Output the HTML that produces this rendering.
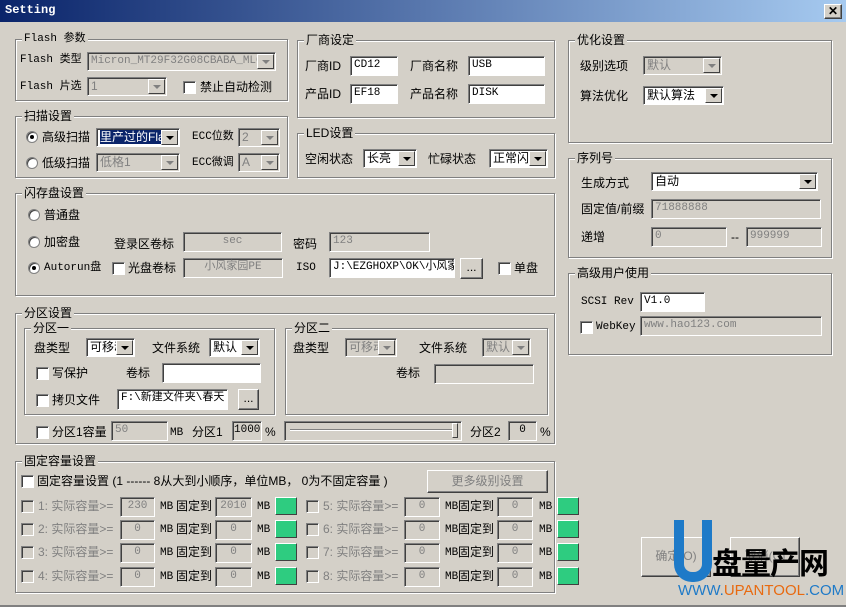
<!DOCTYPE html><html><head><meta charset="utf-8"><style>
*{margin:0;padding:0;box-sizing:border-box}
body{width:846px;height:607px;background:#d4d0c8;font:12px "Liberation Sans","Noto Sans CJK SC",sans-serif;color:#000;position:relative;overflow:hidden}
.a{position:absolute;white-space:nowrap}
.t{position:absolute;white-space:nowrap;line-height:16px}
.g{position:absolute;border:1px solid #808080;box-shadow:1px 1px 0 #fff,inset 1px 1px 0 #fff}
.g>span{position:absolute;top:-9px;left:6px;background:#d4d0c8;padding:0 2px;line-height:16px}
.i{position:absolute;background:#fff;border:1px solid;border-color:#808080 #fff #fff #808080;box-shadow:inset 1px 1px 0 #404040;padding:1px 3px;line-height:15px;overflow:hidden;white-space:nowrap;font-family:"Liberation Mono","Noto Sans CJK SC",monospace;font-size:11px}
.d{background:#d4d0c8;color:#808080}
.c{position:absolute;background:#fff;border:1px solid;border-color:#808080 #fff #fff #808080;box-shadow:inset 1px 1px 0 #404040;padding:1px 3px;line-height:15px;overflow:hidden;white-space:nowrap}
.c.d{background:#d4d0c8;color:#808080}
.c:after{content:"";position:absolute;right:1px;top:1px;bottom:1px;width:15px;background:#d4d0c8;border:1px solid;border-color:#fff #404040 #404040 #fff}
.c:before{content:"";position:absolute;right:5px;top:7px;width:0;height:0;border-left:4px solid transparent;border-right:4px solid transparent;border-top:4px solid #000;z-index:2}
.c.d:before{border-top-color:#808080}
.cb{position:absolute;width:13px;height:13px;background:#fff;border:1px solid;border-color:#808080 #fff #fff #808080;box-shadow:inset 1px 1px 0 #404040}
.cb.d{background:#d4d0c8}
.r{position:absolute;width:12px;height:12px;border-radius:50%;background:#fff;border:1px solid #808080;box-shadow:inset 1px 1px 0 #404040}
.r.on:after{content:"";position:absolute;left:3px;top:3px;width:4px;height:4px;border-radius:50%;background:#000}
.b{position:absolute;background:#d4d0c8;border:1px solid;border-color:#fff #404040 #404040 #fff;box-shadow:inset -1px -1px 0 #808080;text-align:center}
.gr{position:absolute;width:22px;height:18px;background:#2ecc80;border:1px solid;border-color:#fff #404040 #404040 #fff}
.dl{color:#808080}
.m{font-family:"Liberation Mono","Noto Sans CJK SC",monospace;font-size:11px}
</style></head><body>
<div class="a" style="left:0;top:0;width:846px;height:22px;background:linear-gradient(90deg,#0a246a,#a6caf0)"></div>
<div class="a m" style="left:5px;top:3px;color:#fff;font-size:12px;font-weight:bold">Setting</div>
<div class="b" style="left:824px;top:4px;width:18px;height:15px;line-height:12px;font-weight:bold">✕</div>

<div class="g" style="left:15px;top:39px;width:273px;height:62px"><span class="m">Flash 参数</span></div>
<div class="t m" style="left:20px;top:52px">Flash 类型</div>
<div class="c d" style="left:87px;top:52px;width:189px;height:19px;font-family:'Liberation Mono',monospace;font-size:11px">Micron_MT29F32G08CBABA_MLC</div>
<div class="t m" style="left:20px;top:79px">Flash 片选</div>
<div class="c d" style="left:87px;top:77px;width:80px;height:19px">1</div>
<div class="cb" style="left:183px;top:81px"></div><div class="t" style="left:200px;top:79px">禁止自动检测</div>

<div class="g" style="left:15px;top:116px;width:273px;height:62px"><span>扫描设置</span></div>
<div class="r on" style="left:26px;top:131px"></div><div class="t" style="left:42px;top:129px">高级扫描</div>
<div class="c" style="left:96px;top:128px;width:84px;height:19px"><span style="background:#0a246a;color:#fff">里产过的Fla</span></div>
<div class="t m" style="left:192px;top:129px">ECC位数</div>
<div class="c d" style="left:238px;top:128px;width:42px;height:19px">2</div>
<div class="r" style="left:26px;top:157px"></div><div class="t" style="left:42px;top:155px">低级扫描</div>
<div class="c d" style="left:96px;top:153px;width:84px;height:19px">低格1</div>
<div class="t m" style="left:192px;top:155px">ECC微调</div>
<div class="c d" style="left:238px;top:153px;width:42px;height:19px">A</div>

<div class="g" style="left:297px;top:40px;width:258px;height:78px"><span>厂商设定</span></div>
<div class="t" style="left:305px;top:58px">厂商ID</div><div class="i" style="left:350px;top:56px;width:48px;height:20px">CD12</div>
<div class="t" style="left:410px;top:58px">厂商名称</div><div class="i" style="left:468px;top:56px;width:77px;height:20px">USB</div>
<div class="t" style="left:305px;top:86px">产品ID</div><div class="i" style="left:350px;top:84px;width:48px;height:20px">EF18</div>
<div class="t" style="left:410px;top:86px">产品名称</div><div class="i" style="left:468px;top:84px;width:77px;height:20px">DISK</div>

<div class="g" style="left:297px;top:133px;width:258px;height:45px"><span>LED设置</span></div>
<div class="t" style="left:305px;top:151px">空闲状态</div><div class="c" style="left:363px;top:149px;width:54px;height:19px">长亮</div>
<div class="t" style="left:428px;top:151px">忙碌状态</div><div class="c" style="left:489px;top:149px;width:59px;height:19px">正常闪</div>

<div class="g" style="left:568px;top:40px;width:264px;height:103px"><span>优化设置</span></div>
<div class="t" style="left:580px;top:58px">级别选项</div><div class="c d" style="left:643px;top:56px;width:79px;height:19px">默认</div>
<div class="t" style="left:580px;top:88px">算法优化</div><div class="c" style="left:643px;top:86px;width:81px;height:19px">默认算法</div>

<div class="g" style="left:568px;top:158px;width:264px;height:100px"><span>序列号</span></div>
<div class="t" style="left:581px;top:175px">生成方式</div><div class="c" style="left:651px;top:172px;width:167px;height:19px">自动</div>
<div class="t" style="left:581px;top:201px">固定值/前缀</div><div class="i d" style="left:651px;top:199px;width:170px;height:20px">71888888</div>
<div class="t" style="left:581px;top:229px">递增</div><div class="i d" style="left:651px;top:227px;width:76px;height:20px">0</div>
<div class="t" style="left:731px;top:229px">--</div><div class="i d" style="left:746px;top:227px;width:76px;height:20px">999999</div>

<div class="g" style="left:568px;top:273px;width:264px;height:82px"><span>高级用户使用</span></div>
<div class="t m" style="left:581px;top:294px">SCSI Rev</div><div class="i" style="left:640px;top:292px;width:65px;height:20px">V1.0</div>
<div class="cb" style="left:580px;top:321px"></div><div class="t m" style="left:596px;top:319px">WebKey</div>
<div class="i d" style="left:640px;top:316px;width:182px;height:20px">www.hao123.com</div>

<div class="g" style="left:15px;top:193px;width:540px;height:103px"><span>闪存盘设置</span></div>
<div class="r" style="left:28px;top:209px"></div><div class="t" style="left:44px;top:207px">普通盘</div>
<div class="r" style="left:28px;top:236px"></div><div class="t" style="left:44px;top:234px">加密盘</div>
<div class="t" style="left:114px;top:236px">登录区卷标</div><div class="i d" style="left:183px;top:232px;width:99px;height:20px;text-align:center">sec</div>
<div class="t" style="left:293px;top:236px">密码</div><div class="i d" style="left:329px;top:232px;width:101px;height:20px">123</div>
<div class="r on" style="left:28px;top:262px"></div><div class="t m" style="left:44px;top:260px">Autorun盘</div>
<div class="cb" style="left:112px;top:262px"></div><div class="t" style="left:128px;top:260px">光盘卷标</div>
<div class="i d" style="left:183px;top:258px;width:100px;height:20px;text-align:center">小风家园PE</div>
<div class="t m" style="left:296px;top:260px">ISO</div><div class="i" style="left:329px;top:258px;width:126px;height:20px">J:\EZGHOXP\OK\小风家</div>
<div class="b" style="left:460px;top:258px;width:23px;height:21px;line-height:17px">...</div>
<div class="cb" style="left:498px;top:262px"></div><div class="t" style="left:514px;top:260px">单盘</div>

<div class="g" style="left:15px;top:313px;width:540px;height:131px"><span>分区设置</span></div>
<div class="g" style="left:24px;top:328px;width:251px;height:87px"><span>分区一</span></div>
<div class="t" style="left:34px;top:340px">盘类型</div><div class="c" style="left:86px;top:338px;width:49px;height:19px">可移动</div>
<div class="t" style="left:152px;top:340px">文件系统</div><div class="c" style="left:209px;top:338px;width:51px;height:19px">默认</div>
<div class="cb" style="left:36px;top:367px"></div><div class="t" style="left:52px;top:365px">写保护</div>
<div class="t" style="left:126px;top:365px">卷标</div><div class="i" style="left:162px;top:363px;width:99px;height:20px"></div>
<div class="cb" style="left:36px;top:394px"></div><div class="t" style="left:52px;top:392px">拷贝文件</div>
<div class="i" style="left:117px;top:389px;width:111px;height:21px">F:\新建文件夹\春天</div>
<div class="b" style="left:238px;top:389px;width:21px;height:21px;line-height:17px">...</div>
<div class="g" style="left:285px;top:328px;width:263px;height:87px"><span>分区二</span></div>
<div class="t" style="left:293px;top:340px">盘类型</div><div class="c d" style="left:345px;top:338px;width:52px;height:19px">可移动</div>
<div class="t" style="left:419px;top:340px">文件系统</div><div class="c d" style="left:482px;top:338px;width:49px;height:19px">默认</div>
<div class="t" style="left:396px;top:365px">卷标</div><div class="i d" style="left:434px;top:364px;width:100px;height:20px"></div>
<div class="cb" style="left:36px;top:426px"></div><div class="t" style="left:52px;top:424px">分区1容量</div>
<div class="i d" style="left:111px;top:421px;width:57px;height:20px">50</div>
<div class="t m" style="left:170px;top:425px">MB</div><div class="t" style="left:192px;top:424px">分区1</div>
<div class="i" style="left:232px;top:421px;width:30px;height:20px;background:#d4d0c8;padding:1px 1px">1000</div><div class="t" style="left:265px;top:424px">%</div>
<div class="i" style="left:284px;top:421px;width:178px;height:20px;background:#d4d0c8"></div>
<div class="a" style="left:290px;top:429px;width:164px;height:2px;border-top:1px solid #808080;border-bottom:1px solid #fff"></div>
<div class="a" style="left:452px;top:423px;width:6px;height:15px;background:#d4d0c8;border:1px solid;border-color:#fff #404040 #404040 #fff"></div>
<div class="t" style="left:470px;top:424px">分区2</div>
<div class="i" style="left:508px;top:421px;width:29px;height:20px;background:#d4d0c8;text-align:center">0</div><div class="t" style="left:540px;top:424px">%</div>

<div class="g" style="left:15px;top:461px;width:540px;height:132px"><span>固定容量设置</span></div>
<div class="cb" style="left:21px;top:475px"></div><div class="t" style="left:37px;top:473px">固定容量设置 (1 ------ 8从大到小顺序，单位MB， 0为不固定容量 )</div>
<div class="b" style="left:427px;top:470px;width:121px;height:23px;line-height:20px;color:#808080">更多级别设置</div>

<div class="cb d" style="left:21px;top:500px"></div><div class="t dl" style="left:38px;top:498px">1: 实际容量&gt;=</div><div class="i d" style="left:120px;top:497px;width:35px;height:20px;text-align:center">230</div><div class="t m" style="left:160px;top:499px">MB</div><div class="t" style="left:176px;top:498px">固定到</div><div class="i d" style="left:215px;top:497px;width:37px;height:20px;text-align:center">2010</div><div class="t m" style="left:257px;top:499px">MB</div><div class="gr" style="left:275px;top:497px"></div>
<div class="cb d" style="left:21px;top:523px"></div><div class="t dl" style="left:38px;top:521px">2: 实际容量&gt;=</div><div class="i d" style="left:120px;top:520px;width:35px;height:20px;text-align:center">0</div><div class="t m" style="left:160px;top:522px">MB</div><div class="t" style="left:176px;top:521px">固定到</div><div class="i d" style="left:215px;top:520px;width:37px;height:20px;text-align:center">0</div><div class="t m" style="left:257px;top:522px">MB</div><div class="gr" style="left:275px;top:520px"></div>
<div class="cb d" style="left:21px;top:546px"></div><div class="t dl" style="left:38px;top:544px">3: 实际容量&gt;=</div><div class="i d" style="left:120px;top:543px;width:35px;height:20px;text-align:center">0</div><div class="t m" style="left:160px;top:545px">MB</div><div class="t" style="left:176px;top:544px">固定到</div><div class="i d" style="left:215px;top:543px;width:37px;height:20px;text-align:center">0</div><div class="t m" style="left:257px;top:545px">MB</div><div class="gr" style="left:275px;top:543px"></div>
<div class="cb d" style="left:21px;top:570px"></div><div class="t dl" style="left:38px;top:568px">4: 实际容量&gt;=</div><div class="i d" style="left:120px;top:567px;width:35px;height:20px;text-align:center">0</div><div class="t m" style="left:160px;top:569px">MB</div><div class="t" style="left:176px;top:568px">固定到</div><div class="i d" style="left:215px;top:567px;width:37px;height:20px;text-align:center">0</div><div class="t m" style="left:257px;top:569px">MB</div><div class="gr" style="left:275px;top:567px"></div>

<div class="cb d" style="left:306px;top:500px"></div><div class="t dl" style="left:323px;top:498px">5: 实际容量&gt;=</div><div class="i d" style="left:404px;top:497px;width:36px;height:20px;text-align:center">0</div><div class="t m" style="left:445px;top:499px">MB</div><div class="t" style="left:458px;top:498px">固定到</div><div class="i d" style="left:497px;top:497px;width:36px;height:20px;text-align:center">0</div><div class="t m" style="left:539px;top:499px">MB</div><div class="gr" style="left:557px;top:497px"></div>
<div class="cb d" style="left:306px;top:523px"></div><div class="t dl" style="left:323px;top:521px">6: 实际容量&gt;=</div><div class="i d" style="left:404px;top:520px;width:36px;height:20px;text-align:center">0</div><div class="t m" style="left:445px;top:522px">MB</div><div class="t" style="left:458px;top:521px">固定到</div><div class="i d" style="left:497px;top:520px;width:36px;height:20px;text-align:center">0</div><div class="t m" style="left:539px;top:522px">MB</div><div class="gr" style="left:557px;top:520px"></div>
<div class="cb d" style="left:306px;top:546px"></div><div class="t dl" style="left:323px;top:544px">7: 实际容量&gt;=</div><div class="i d" style="left:404px;top:543px;width:36px;height:20px;text-align:center">0</div><div class="t m" style="left:445px;top:545px">MB</div><div class="t" style="left:458px;top:544px">固定到</div><div class="i d" style="left:497px;top:543px;width:36px;height:20px;text-align:center">0</div><div class="t m" style="left:539px;top:545px">MB</div><div class="gr" style="left:557px;top:543px"></div>
<div class="cb d" style="left:306px;top:570px"></div><div class="t dl" style="left:323px;top:568px">8: 实际容量&gt;=</div><div class="i d" style="left:404px;top:567px;width:36px;height:20px;text-align:center">0</div><div class="t m" style="left:445px;top:569px">MB</div><div class="t" style="left:458px;top:568px">固定到</div><div class="i d" style="left:497px;top:567px;width:36px;height:20px;text-align:center">0</div><div class="t m" style="left:539px;top:569px">MB</div><div class="gr" style="left:557px;top:567px"></div>

<div class="b" style="left:641px;top:537px;width:70px;height:40px;line-height:36px;color:#808080">确定(O)</div>
<div class="b" style="left:730px;top:537px;width:70px;height:40px;line-height:36px;color:#808080">取消(C)</div>
<div class="a" style="left:674px;top:520px;width:38px;height:62px;border:10px solid #1e7ac8;border-top:0;border-radius:0 0 18px 18px"></div>
<div class="a" style="left:712px;top:548px;font-size:30px;font-weight:bold;line-height:34px;letter-spacing:-1px">盘量产网</div>
<div class="a" style="left:678px;top:583px;font-size:15px;line-height:16px;color:#1e7ac8">WWW.<span style="color:#e86a10">UPANTOOL</span>.COM</div>
<div class="a" style="left:0;top:605px;width:846px;height:2px;background:#808080"></div>
</body></html>
